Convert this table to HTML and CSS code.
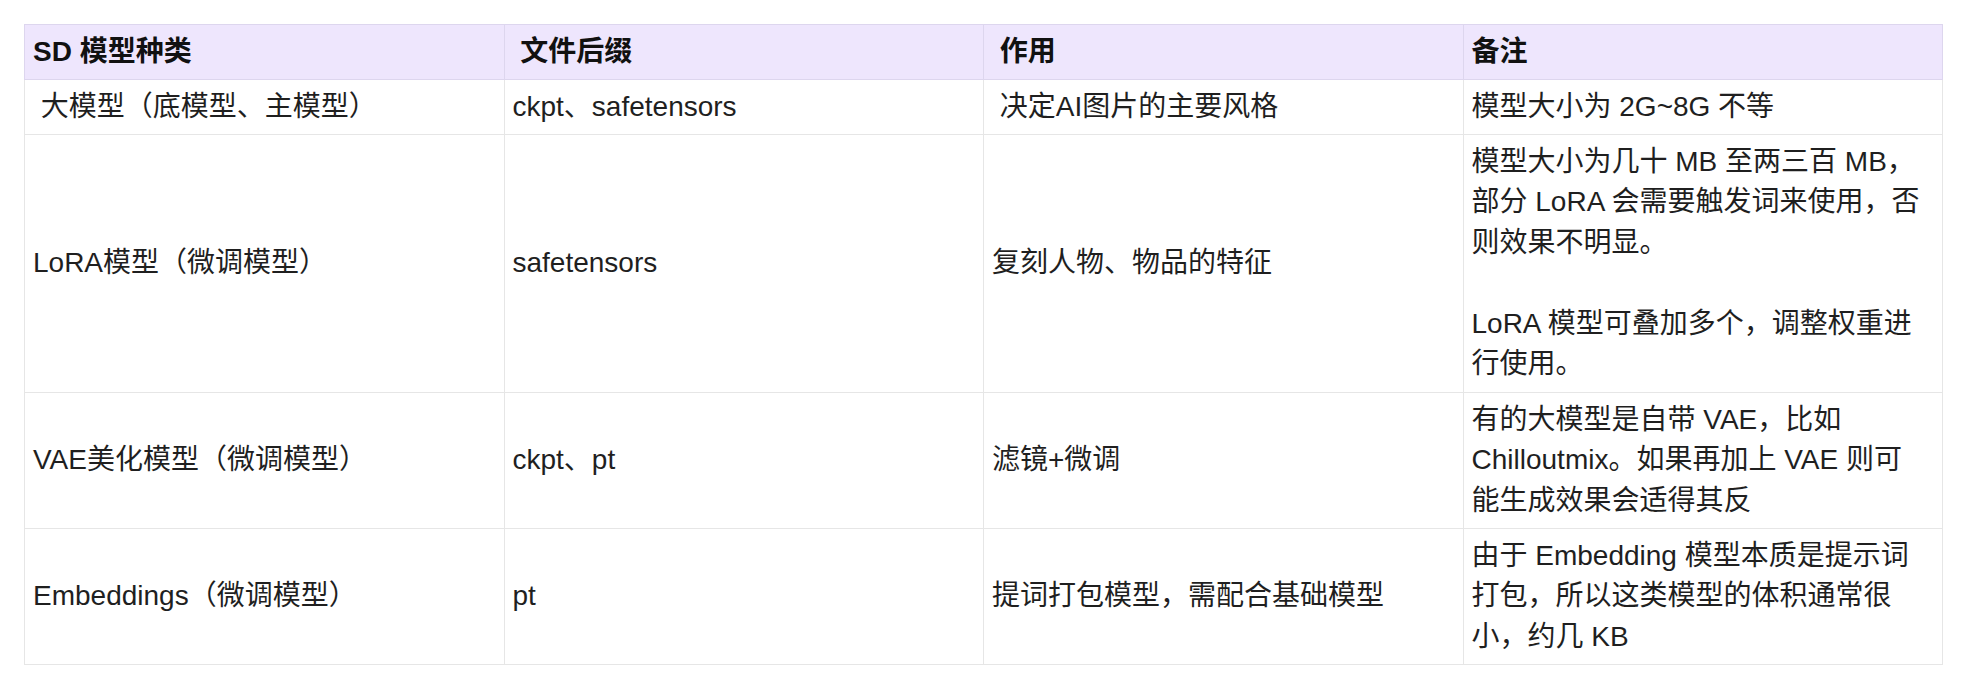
FILE: index.html
```html
<!DOCTYPE html>
<html lang="zh-CN">
<head>
<meta charset="utf-8">
<title>SD 模型种类</title>
<link rel="stylesheet" href="styles.css">
</head>
<body>
<div class="page">
  <table class="model-table">
    <colgroup>
      <col class="col"><col class="col"><col class="col"><col class="col">
    </colgroup>
    <thead>
      <tr>
        <th>SD 模型种类</th>
        <th>&nbsp;文件后缀</th>
        <th>&nbsp;作用</th>
        <th>备注</th>
      </tr>
    </thead>
    <tbody>
      <tr>
        <td>&nbsp;大模型（底模型、主模型）</td>
        <td>ckpt、safetensors</td>
        <td>&nbsp;决定AI图片的主要风格</td>
        <td>模型大小为 2G~8G 不等</td>
      </tr>
      <tr>
        <td>LoRA模型（微调模型）</td>
        <td>safetensors</td>
        <td>复刻人物、物品的特征</td>
        <td>模型大小为几十 MB 至两三百 MB，<br>部分 LoRA 会需要触发词来使用，否<br>则效果不明显。<br><br>LoRA 模型可叠加多个，调整权重进<br>行使用。</td>
      </tr>
      <tr>
        <td>VAE美化模型（微调模型）</td>
        <td>ckpt、pt</td>
        <td>滤镜+微调</td>
        <td>有的大模型是自带 VAE，比如<br>Chilloutmix。如果再加上 VAE 则可<br>能生成效果会适得其反</td>
      </tr>
      <tr>
        <td>Embeddings（微调模型）</td>
        <td>pt</td>
        <td>提词打包模型，需配合基础模型</td>
        <td>由于 Embedding 模型本质是提示词<br>打包，所以这类模型的体积通常很<br>小，约几 KB</td>
      </tr>
    </tbody>
  </table>
</div>
</body>
</html>
```

FILE: styles.css
```css
html, body {
  margin: 0;
  padding: 0;
  background: #ffffff;
}

.page {
  padding: 24px 0 0 24px;
}

.model-table {
  width: 1919px;
  table-layout: fixed;
  border-collapse: collapse;
  font-family: "Liberation Sans", "Noto Sans CJK SC", sans-serif;
  font-size: 28px;
  line-height: 40.5px;
  color: #1f1f1f;
}

.model-table .col {
  width: 25%;
}

.model-table th,
.model-table td {
  border: 1px solid #e6e6e6;
  padding: 6.8px 8px;
  text-align: left;
  vertical-align: middle;
  white-space: nowrap;
}

.model-table th {
  background: #eee6fd;
  border-color: #ddd6ee;
  font-weight: 700;
  color: #111111;
}
```
